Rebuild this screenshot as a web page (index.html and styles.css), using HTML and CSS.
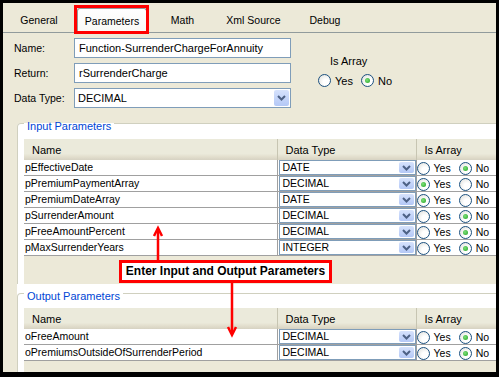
FILE: index.html
```html
<!doctype html>
<html lang="en">
<head>
	<meta charset="UTF-8">
	<title>Parameters</title>
	<link rel="stylesheet" href="styles.css">
</head>
<body>
	<div class="window">
		<div class="tabs">
			<div class="tab tab-general">General</div>
			<div class="tab tab-params active">Parameters</div>
			<div class="tab tab-math">Math</div>
			<div class="tab tab-xml">Xml Source</div>
			<div class="tab tab-debug">Debug</div>
		</div>

		<div class="form">
			<div class="fields">
				<label>Name:</label>
				<div class="textbox">Function-SurrenderChargeForAnnuity</div>
				<label>Return:</label>
				<div class="textbox">rSurrenderCharge</div>
				<label>Data Type:</label>
				<div class="combo combo-big">DECIMAL<span class="drop"><svg width="9" height="6" viewBox="0 0 9 6"><polyline points="1,1 4.5,4.5 8,1" fill="none" stroke="#4d6185" stroke-width="2"/></svg></span></div>
			</div>
			<div class="array-group">
				<div class="array-label">Is Array</div>
				<div class="radios"><span class="radio"></span><span class="rtext">Yes</span><span class="radio checked"></span><span class="rtext">No</span></div>
			</div>
		</div>

		<fieldset class="group group-input">
			<legend>Input Parameters</legend>
			<div class="pane pane-input">
				<table class="grid">
					<thead>
						<tr><th class="c-name">Name</th><th class="c-type">Data Type</th><th class="c-arr">Is Array</th></tr>
					</thead>
					<tbody>
						<tr><td>pEffectiveDate</td><td class="type"><div class="combo">DATE<span class="drop"><svg width="9" height="6" viewBox="0 0 9 6"><polyline points="1,1 4.5,4.5 8,1" fill="none" stroke="#4d6185" stroke-width="2"/></svg></span></div></td><td class="arr"><span class="radio"></span><span class="rtext">Yes</span><span class="radio checked"></span><span class="rtext">No</span></td></tr>
						<tr><td>pPremiumPaymentArray</td><td class="type"><div class="combo">DECIMAL<span class="drop"><svg width="9" height="6" viewBox="0 0 9 6"><polyline points="1,1 4.5,4.5 8,1" fill="none" stroke="#4d6185" stroke-width="2"/></svg></span></div></td><td class="arr"><span class="radio checked"></span><span class="rtext">Yes</span><span class="radio"></span><span class="rtext">No</span></td></tr>
						<tr><td>pPremiumDateArray</td><td class="type"><div class="combo">DATE<span class="drop"><svg width="9" height="6" viewBox="0 0 9 6"><polyline points="1,1 4.5,4.5 8,1" fill="none" stroke="#4d6185" stroke-width="2"/></svg></span></div></td><td class="arr"><span class="radio checked"></span><span class="rtext">Yes</span><span class="radio"></span><span class="rtext">No</span></td></tr>
						<tr><td>pSurrenderAmount</td><td class="type"><div class="combo">DECIMAL<span class="drop"><svg width="9" height="6" viewBox="0 0 9 6"><polyline points="1,1 4.5,4.5 8,1" fill="none" stroke="#4d6185" stroke-width="2"/></svg></span></div></td><td class="arr"><span class="radio"></span><span class="rtext">Yes</span><span class="radio checked"></span><span class="rtext">No</span></td></tr>
						<tr><td>pFreeAmountPercent</td><td class="type"><div class="combo">DECIMAL<span class="drop"><svg width="9" height="6" viewBox="0 0 9 6"><polyline points="1,1 4.5,4.5 8,1" fill="none" stroke="#4d6185" stroke-width="2"/></svg></span></div></td><td class="arr"><span class="radio"></span><span class="rtext">Yes</span><span class="radio checked"></span><span class="rtext">No</span></td></tr>
						<tr><td>pMaxSurrenderYears</td><td class="type"><div class="combo">INTEGER<span class="drop"><svg width="9" height="6" viewBox="0 0 9 6"><polyline points="1,1 4.5,4.5 8,1" fill="none" stroke="#4d6185" stroke-width="2"/></svg></span></div></td><td class="arr"><span class="radio"></span><span class="rtext">Yes</span><span class="radio checked"></span><span class="rtext">No</span></td></tr>
					</tbody>
				</table>
			</div>
		</fieldset>

		<div class="group-wrap">
			<fieldset class="group group-output">
				<legend>Output Parameters</legend>
				<div class="pane pane-output">
					<table class="grid">
						<thead>
							<tr><th class="c-name">Name</th><th class="c-type">Data Type</th><th class="c-arr">Is Array</th></tr>
						</thead>
						<tbody>
							<tr><td>oFreeAmount</td><td class="type"><div class="combo">DECIMAL<span class="drop"><svg width="9" height="6" viewBox="0 0 9 6"><polyline points="1,1 4.5,4.5 8,1" fill="none" stroke="#4d6185" stroke-width="2"/></svg></span></div></td><td class="arr"><span class="radio"></span><span class="rtext">Yes</span><span class="radio checked"></span><span class="rtext">No</span></td></tr>
							<tr><td>oPremiumsOutsideOfSurrenderPeriod</td><td class="type"><div class="combo">DECIMAL<span class="drop"><svg width="9" height="6" viewBox="0 0 9 6"><polyline points="1,1 4.5,4.5 8,1" fill="none" stroke="#4d6185" stroke-width="2"/></svg></span></div></td><td class="arr"><span class="radio"></span><span class="rtext">Yes</span><span class="radio checked"></span><span class="rtext">No</span></td></tr>
						</tbody>
					</table>
				</div>
			</fieldset>
		</div>

		<!-- annotation layer -->
		<div class="tab-mark"></div>
		<div class="callout">Enter Input and Output Parameters</div>
		<svg class="arrows" width="493" height="369">
			<line x1="155" y1="227" x2="155" y2="258" stroke="#f00" stroke-width="2.5"/>
			<polyline points="151,233 155,225 159,233" fill="none" stroke="#f00" stroke-width="2.5"/>
			<line x1="229" y1="279" x2="229" y2="331" stroke="#f00" stroke-width="2.5"/>
			<polyline points="225,324 229,332 233,324" fill="none" stroke="#f00" stroke-width="2.5"/>
		</svg>
	</div>
</body>
</html>
```

FILE: styles.css
```css
body{
	margin: 0;
	background: #000;
	font-family: "Liberation Sans", Arial, sans-serif;
	font-size: 10.5px;
	color: #000;
}
.window{
	position: relative;
	width: 493px;
	height: 369px;
	border: 3px solid #000;
	border-bottom-width: 5px;
	background: #ece9d8;
	overflow: hidden;
}

/* tabs */
.tabs{
	display: flex;
	align-items: flex-end;
	height: 29px;
	border-bottom: 1px solid #919b9c;
}
.tab{
	height: 24px;
	line-height: 24px;
	text-align: center;
	margin-left: 2px;
}
.tab-general{ width: 72px; margin-left: 0; }
.tab-params{ width: 70px; }
.tab-math{ width: 67px; }
.tab-xml{ width: 75px; margin-left: 0; }
.tab-debug{ width: 68px; margin-left: 0; }
.tab.active{
	height: 25px;
	margin-bottom: -1px;
	box-sizing: border-box;
	border: 1px solid #919b9c;
	border-bottom: none;
	border-radius: 3px 3px 0 0;
	background: linear-gradient(#ffffff, #f8f8f5);
}

/* top form */
.form{
	display: flex;
	padding: 5px 0 0 11px;
}
.fields{
	display: grid;
	grid-template-columns: 60px 217px;
	grid-auto-rows: 20px;
	row-gap: 5px;
	align-items: center;
}
.textbox{
	height: 20px;
	box-sizing: border-box;
	border: 1px solid #7f9db9;
	background: #fff;
	padding: 0 4px;
	line-height: 18px;
	font-size: 11px;
}
.combo{
	display: flex;
	justify-content: space-between;
	box-sizing: border-box;
	border: 1px solid #7f9db9;
	background: #fff;
	padding-left: 3px;
}
.combo-big{
	height: 20px;
	line-height: 18px;
	font-size: 11px;
}
.drop{
	width: 15px;
	margin: 1px;
	display: flex;
	align-items: center;
	justify-content: center;
	background: linear-gradient(#d6e2fc, #b4c8f6);
	border-radius: 2px;
}
.array-group{
	margin-left: 27px;
	padding-top: 17px;
}
.array-label{
	padding-left: 12px;
	line-height: 13px;
	font-size: 11px;
}
.radios{
	display: flex;
	align-items: center;
	margin-top: 6px;
	font-size: 11px;
}
.radio{
	position: relative;
	width: 13px;
	height: 13px;
	box-sizing: border-box;
	border: 1px solid #1c5180;
	border-radius: 50%;
	background: radial-gradient(circle at 65% 65%, #ffffff 30%, #dcdcd7);
	flex: none;
}
.radio.checked::after{
	content: "";
	position: absolute;
	left: 3px;
	top: 3px;
	width: 5px;
	height: 5px;
	border-radius: 50%;
	background: radial-gradient(circle at 40% 40%, #7ee07a, #21a121);
}
.rtext{
	margin: 0 8px 0 4px;
}

/* groups */
.group{
	margin: 6px 0 0 14px;
	width: 520px;
	padding: 6px 0 0 6px;
	border: 1px solid #d0d0bf;
	border-bottom: none;
	border-radius: 4px 4px 0 0;
	background: #fff;
	box-sizing: border-box;
}
.group legend{
	padding: 6px 3px 0;
	line-height: 13px;
	font-size: 11px;
	color: #0046d5;
}
.group-wrap{
	margin-left: 14px;
	width: 520px;
	background: #fff;
}
.group-output{
	margin: 0;
	padding-top: 5px;
}
.pane{
	background: #ece9d8;
	overflow: hidden;
}
.pane-input{ height: 145px; }
.pane-output{ height: 80px; }

.grid{
	border-collapse: collapse;
	table-layout: fixed;
	width: 500px;
}
.grid th{
	height: 21px;
	padding: 0 0 0 8px;
	text-align: left;
	font-weight: normal;
	font-size: 11px;
	background: linear-gradient(#ebeadb 70%, #e2decd 85%, #d6d2c2);
	border-right: 1px solid #c7c5b2;
	box-sizing: border-box;
}
.c-name{ width: 253px; }
.c-type{ width: 139px; }
.c-arr{ width: 108px; }
.grid td{
	height: 15px;
	padding: 0 0 0 1px;
	background: #fff;
	border-bottom: 1px solid #a0a0a0;
	border-right: 1px solid #a0a0a0;
	white-space: nowrap;
	line-height: 15px;
}
.grid td.type .combo{
	height: 15px;
	line-height: 13px;
}
.grid td.arr{
	padding-left: 0;
}
.grid td.arr .radio,
.grid td.arr .rtext{
	display: inline-block;
	vertical-align: middle;
}
.grid td.arr .rtext{
	line-height: 13px;
}

/* annotations */
.tab-mark{
	position: absolute;
	left: 71px;
	top: 2px;
	width: 75px;
	height: 29px;
	box-sizing: border-box;
	border: 3px solid #f00;
}
.callout{
	position: absolute;
	left: 116px;
	top: 257px;
	width: 213px;
	height: 23px;
	box-sizing: border-box;
	border: 3px solid #f00;
	background: #fff;
	font-weight: bold;
	font-size: 12px;
	line-height: 17px;
	text-align: center;
}
.arrows{
	position: absolute;
	left: 0;
	top: 0;
	pointer-events: none;
}
```
